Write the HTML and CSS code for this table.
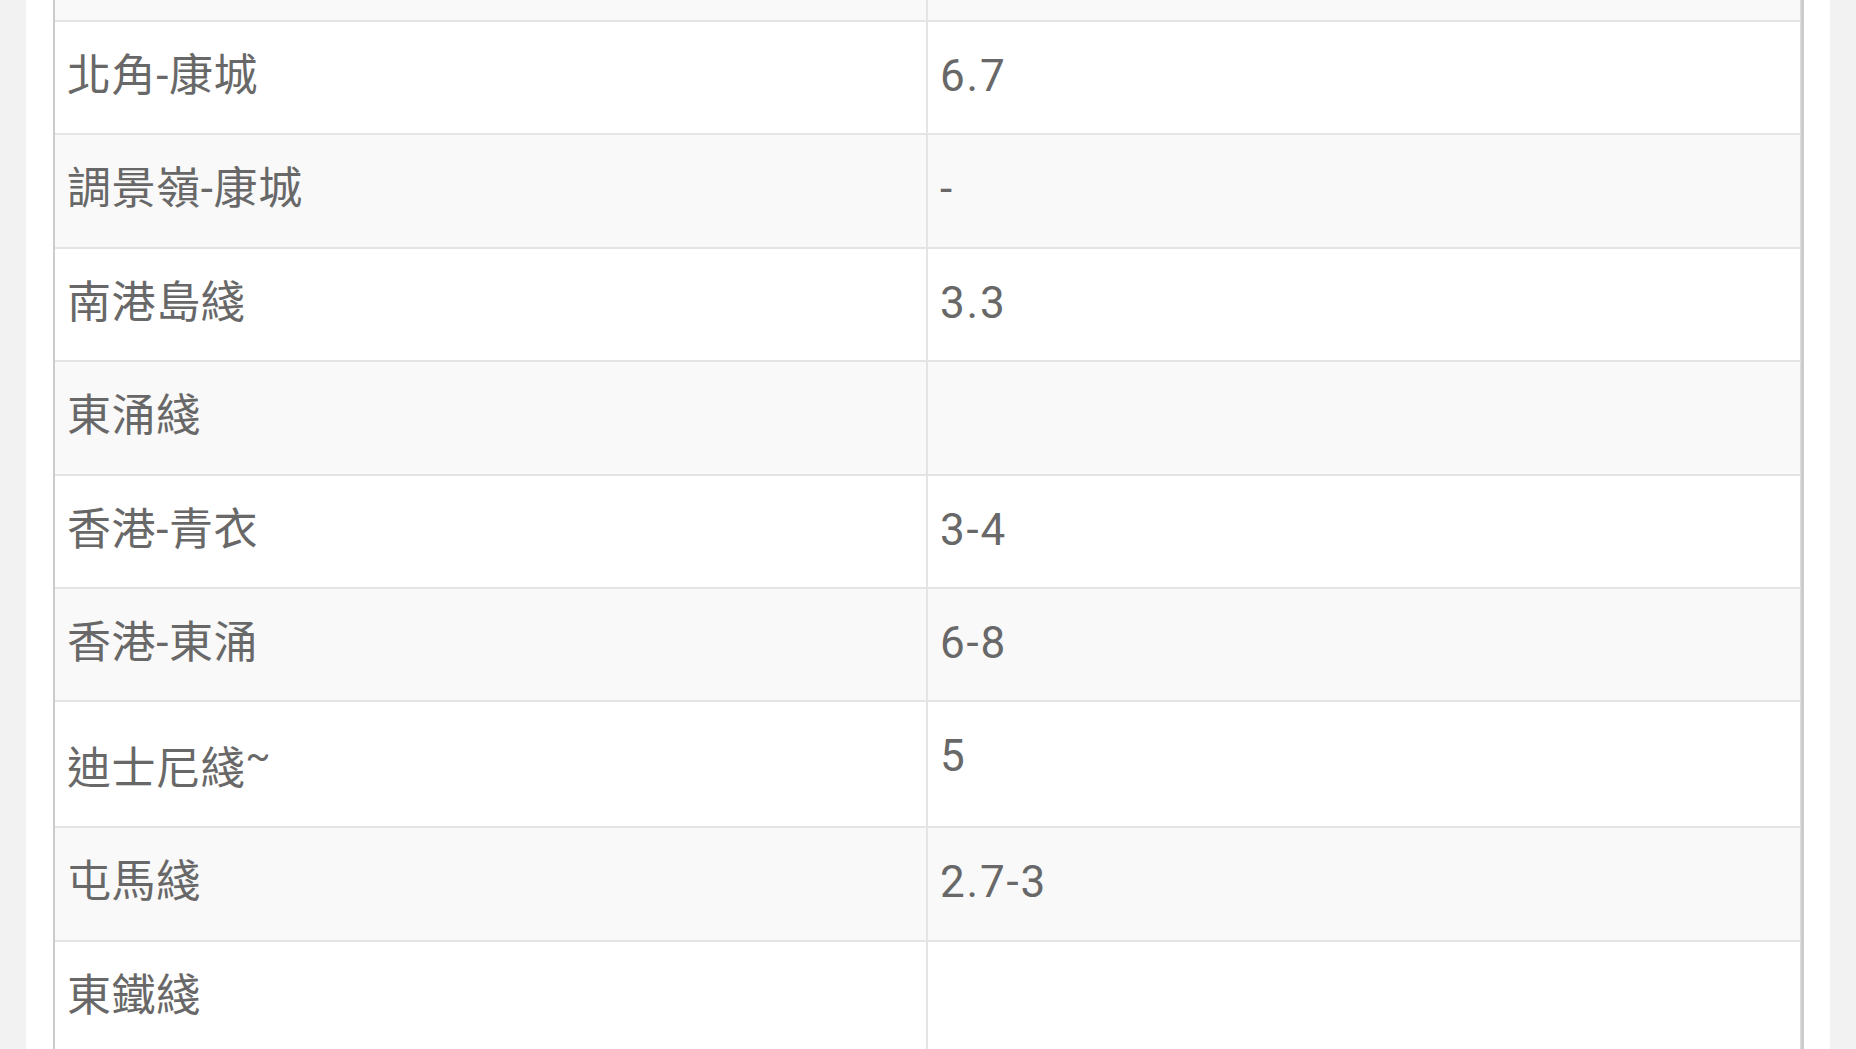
FILE: index.html
```html
<!DOCTYPE html>
<html lang="zh-Hant">
<head>
<meta charset="utf-8">
<title>港鐵綫</title>
<link rel="stylesheet" href="styles.css">
</head>
<body>
<div class="page">
  <div class="table">
    <div class="row cut"><div class="cell"></div><div class="cell"></div></div>
    <div class="row"><div class="cell">北角-康城</div><div class="cell">6.7</div></div>
    <div class="row"><div class="cell">調景嶺-康城</div><div class="cell">-</div></div>
    <div class="row"><div class="cell">南港島綫</div><div class="cell">3.3</div></div>
    <div class="row"><div class="cell">東涌綫</div><div class="cell"></div></div>
    <div class="row"><div class="cell">香港-青衣</div><div class="cell">3-4</div></div>
    <div class="row"><div class="cell">香港-東涌</div><div class="cell">6-8</div></div>
    <div class="row"><div class="cell">迪士尼綫<sup>~</sup></div><div class="cell">5</div></div>
    <div class="row"><div class="cell">屯馬綫</div><div class="cell">2.7-3</div></div>
    <div class="row"><div class="cell">東鐵綫</div><div class="cell"></div></div>
  </div>
</div>
</body>
</html>
```
FILE: styles.css
```css
html, body {
  margin: 0;
  padding: 0;
  background: #f2f2f2;
  height: 100%;
  overflow: hidden;
}
.page {
  margin: 0 26px;
  padding: 0 26px 0 27px;
  background: #ffffff;
  min-height: 100%;
}
.table {
  border-left: 2px solid #cccccc;
  border-right: 3px solid #cccccc;
  font-family: Roboto, "Noto Sans CJK TC", sans-serif;
  font-size: 44px;
  color: #686868;
}
.row {
  display: grid;
  grid-template-columns: 873px 1fr;
  border-bottom: 2px solid #e4e4e4;
  background: #ffffff;
}
.row:nth-child(odd) {
  background: #f9f9f9;
}
.cell {
  padding: 28px 12px 31.4px 12px;
  line-height: 52px;
  white-space: nowrap;
}
.cell:first-child {
  border-right: 2px solid #e4e4e4;
  letter-spacing: 0.6px;
}
.cell:last-child {
  border-right: 1px solid #dddddd;
  letter-spacing: 1.8px;
}
.row.cut .cell {
  height: 20px;
  padding: 0;
}
```
